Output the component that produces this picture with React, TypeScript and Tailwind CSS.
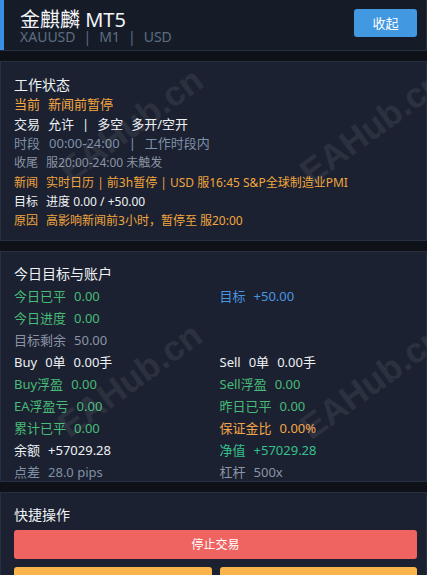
import React from "react";

const Sep = () => <span>|</span>;

function Row2({ children, cls }: { children: React.ReactNode; cls: string }) {
  return <div className={`flex items-center gap-[8px] h-[22px] text-[13px] ${cls}`}>{children}</div>;
}

export default function App() {
  return (
    <div className="relative w-[427px] h-[575px] overflow-hidden bg-[#0e1218] font-[family-name:'Noto_Sans','Noto_Sans_CJK_SC',sans-serif]">
      {/* Header */}
      <header className="flex h-[51px] bg-[#161c27] border-b border-r border-[#263041]">
        <div className="w-[4px] bg-[#3b8fe3]" />
        <div className="flex-1 flex justify-between pl-[16px] pr-[9px]">
          <div className="pt-[10px]">
            <div className="h-[20px] leading-[20px] text-[20px] text-[#f2f4f7] whitespace-nowrap">金麒麟 MT5</div>
            <div className="flex gap-[8px] h-[14px] leading-[14px] text-[14px] text-[#5d6d82]">
              <span>XAUUSD</span>
              <Sep />
              <span>M1</span>
              <Sep />
              <span>USD</span>
            </div>
          </div>
          <button className="mt-[9px] w-[63px] h-[28px] rounded-[3px] bg-[#4299e1] text-white text-[13px] leading-[28px]">
            收起
          </button>
        </div>
      </header>

      {/* Section 1 */}
      <section className="mt-[10px] h-[180px] border border-[#263041] bg-[#1b2130] pl-[13px] pr-[9px] pt-[13px] overflow-hidden">
        <div className="h-[20px] leading-[20px] text-[14px] text-[#eef1f5]">工作状态</div>
        <div className="flex items-center gap-[8px] h-[20px] text-[13px] text-[#f5a742]">
          <span>当前</span>
          <span>新闻前暂停</span>
        </div>
        <div className="flex items-center gap-[8px] h-[19px] text-[13px] text-[#eef1f5]">
          <span>交易</span>
          <span>允许</span>
          <Sep />
          <span>多空</span>
          <span>多开/空开</span>
        </div>
        <div className="flex items-center gap-[9px] h-[20px] text-[13px] text-[#7f90a8]">
          <span>时段</span>
          <span>00:00-24:00</span>
          <Sep />
          <span>工作时段内</span>
        </div>
        <div className="flex items-center gap-[8px] h-[17px] text-[12px] text-[#8a94a4]">
          <span>收尾</span>
          <span>服20:00-24:00 未触发</span>
        </div>
        <div className="mt-[2px] flex items-center gap-[8px] h-[19px] text-[12px] text-[#f0a53e] whitespace-nowrap">
          <span>新闻</span>
          <span>实时日历 | 前3h暂停 | USD 服16:45 S&amp;P全球制造业PMI</span>
        </div>
        <div className="flex items-center gap-[8px] h-[19px] text-[12px] text-[#eef1f5]">
          <span>目标</span>
          <span>进度 0.00 / +50.00</span>
        </div>
        <div className="flex items-center gap-[8px] h-[19px] text-[12px] text-[#f0a53e]">
          <span>原因</span>
          <span>高影响新闻前3小时，暂停至 服20:00</span>
        </div>
      </section>

      {/* Section 2 */}
      <section className="mt-[10px] h-[231px] border border-[#263041] bg-[#1b2130] pl-[13px] pr-[9px] pt-[12px] overflow-hidden">
        <div className="h-[20px] leading-[20px] text-[14px] text-[#eef1f5] mb-[2px]">今日目标与账户</div>
        <div className="grid grid-cols-2 gap-x-[8px]">
          <Row2 cls="text-[#48bb78]"><span>今日已平</span><span>0.00</span></Row2>
          <Row2 cls="text-[#4a95e0]"><span>目标</span><span>+50.00</span></Row2>
          <Row2 cls="text-[#48bb78]"><span>今日进度</span><span>0.00</span></Row2>
          <div />
          <Row2 cls="text-[#8a94a6]"><span>目标剩余</span><span>50.00</span></Row2>
          <div />
          <Row2 cls="text-[#eef1f5]"><span>Buy</span><span>0单</span><span>0.00手</span></Row2>
          <Row2 cls="text-[#eef1f5]"><span>Sell</span><span>0单</span><span>0.00手</span></Row2>
          <Row2 cls="text-[#48bb78]"><span>Buy浮盈</span><span>0.00</span></Row2>
          <Row2 cls="text-[#48bb78]"><span>Sell浮盈</span><span>0.00</span></Row2>
          <Row2 cls="text-[#48bb78]"><span>EA浮盈亏</span><span>0.00</span></Row2>
          <Row2 cls="text-[#48bb78]"><span>昨日已平</span><span>0.00</span></Row2>
          <Row2 cls="text-[#48bb78]"><span>累计已平</span><span>0.00</span></Row2>
          <Row2 cls="text-[#f3a54a]"><span>保证金比</span><span>0.00%</span></Row2>
          <Row2 cls="text-[#eef1f5]"><span>余额</span><span>+57029.28</span></Row2>
          <Row2 cls="text-[#34c08c]"><span>净值</span><span>+57029.28</span></Row2>
          <Row2 cls="text-[#8090a6]"><span>点差</span><span>28.0 pips</span></Row2>
          <Row2 cls="text-[#8a94a6]"><span>杠杆</span><span>500x</span></Row2>
        </div>
      </section>

      {/* Section 3 */}
      <section className="mt-[10px] h-[120px] border border-[#263041] bg-[#1b2130] pl-[13px] pr-[9px] pt-[12px]">
        <div className="h-[20px] leading-[20px] text-[14px] text-[#eef1f5]">快捷操作</div>
        <button className="mt-[5px] w-full h-[29px] rounded-[3px] bg-[#ef6461] text-white text-[12px]">停止交易</button>
        <div className="mt-[8px] grid grid-cols-2 gap-x-[8px]">
          <div className="h-[29px] rounded-[3px] bg-[#fbb44c]" />
          <div className="h-[29px] rounded-[3px] bg-[#fbb44c]" />
        </div>
      </section>

      {/* Watermarks */}
      <div className="pointer-events-none absolute inset-0">
        {[
          [131, 125],
          [372, 127],
          [130, 380],
          [372, 382],
        ].map(([x, y], i) => (
          <div
            key={i}
            className="absolute -translate-x-1/2 -translate-y-1/2 -rotate-[36deg] text-[35px] font-bold text-white/[0.07] whitespace-nowrap font-[family-name:'Liberation_Sans',sans-serif]"
            style={{ left: x, top: y }}
          >
            EAHub.cn
          </div>
        ))}
      </div>
    </div>
  );
}
